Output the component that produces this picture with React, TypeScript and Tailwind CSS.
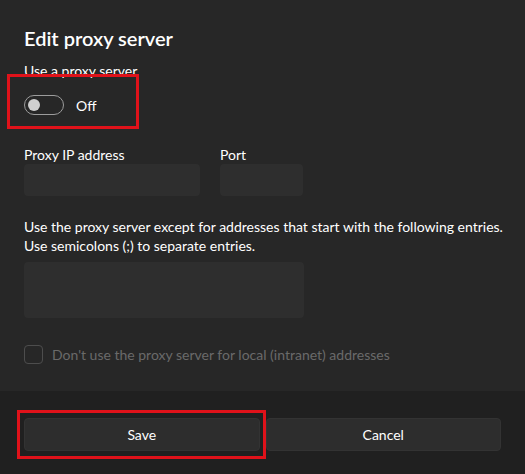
import React from "react";

export default function App() {
  return (
    <div
      className="relative w-[525px] h-[474px] bg-[#272727] flex flex-col text-white overflow-hidden"
      style={{ fontFamily: 'Lato, "Noto Sans", sans-serif' }}
    >
      <div className="flex-1 px-6 pt-6">
        <h1 className="text-[20px] leading-[28px] font-semibold">Edit proxy server</h1>
        <div className="mt-[9px] text-[14px] leading-[20px]">Use a proxy server</div>
        <div className="mt-[14px] flex items-center h-5">
          <div className="w-10 h-5 rounded-full border border-[#9c9c9c] flex items-center px-[3px]">
            <div className="w-3 h-3 rounded-full bg-[#d0d0d0]" />
          </div>
          <span className="ml-3 text-[14px]">Off</span>
        </div>
        <div className="mt-[31px] flex gap-5">
          <div className="flex flex-col">
            <span className="text-[14px] leading-[18px]">Proxy IP address</span>
            <div className="w-[176px] h-8 rounded bg-[#2e2e2e]" />
          </div>
          <div className="flex flex-col">
            <span className="text-[14px] leading-[18px]">Port</span>
            <div className="w-[83px] h-8 rounded bg-[#2e2e2e]" />
          </div>
        </div>
        <p className="mt-[21px] text-[14px] leading-[19px] whitespace-nowrap">
          Use the proxy server except for addresses that start with the following entries.
          <br />
          Use semicolons (;) to separate entries.
        </p>
        <div className="mt-[7px] w-[280px] h-14 rounded bg-[#2e2e2e]" />
        <div className="mt-[26px] flex items-center">
          <div className="w-[19px] h-[19px] rounded border border-[#4d4d4d]" />
          <span className="ml-[9px] text-[14px] text-[#6a6a6a]">
            Don't use the proxy server for local (intranet) addresses
          </span>
        </div>
      </div>
      <div className="h-[83px] bg-[#202020] px-6 pt-[27px]">
        <div className="grid grid-cols-2 gap-[6px]">
          <button className="h-[33px] rounded bg-[#2d2d2d] border border-[#333333] text-[14px] text-white">
            Save
          </button>
          <button className="h-[33px] rounded bg-[#2d2d2d] border border-[#333333] text-[14px] text-white">
            Cancel
          </button>
        </div>
      </div>
      <div className="absolute left-[7px] top-[74px] w-[132px] h-[55px] border-[3px] border-[#e0121a]" />
      <div className="absolute left-[17px] top-[410px] w-[249px] h-[49px] border-[3px] border-[#e0121a]" />
    </div>
  );
}
